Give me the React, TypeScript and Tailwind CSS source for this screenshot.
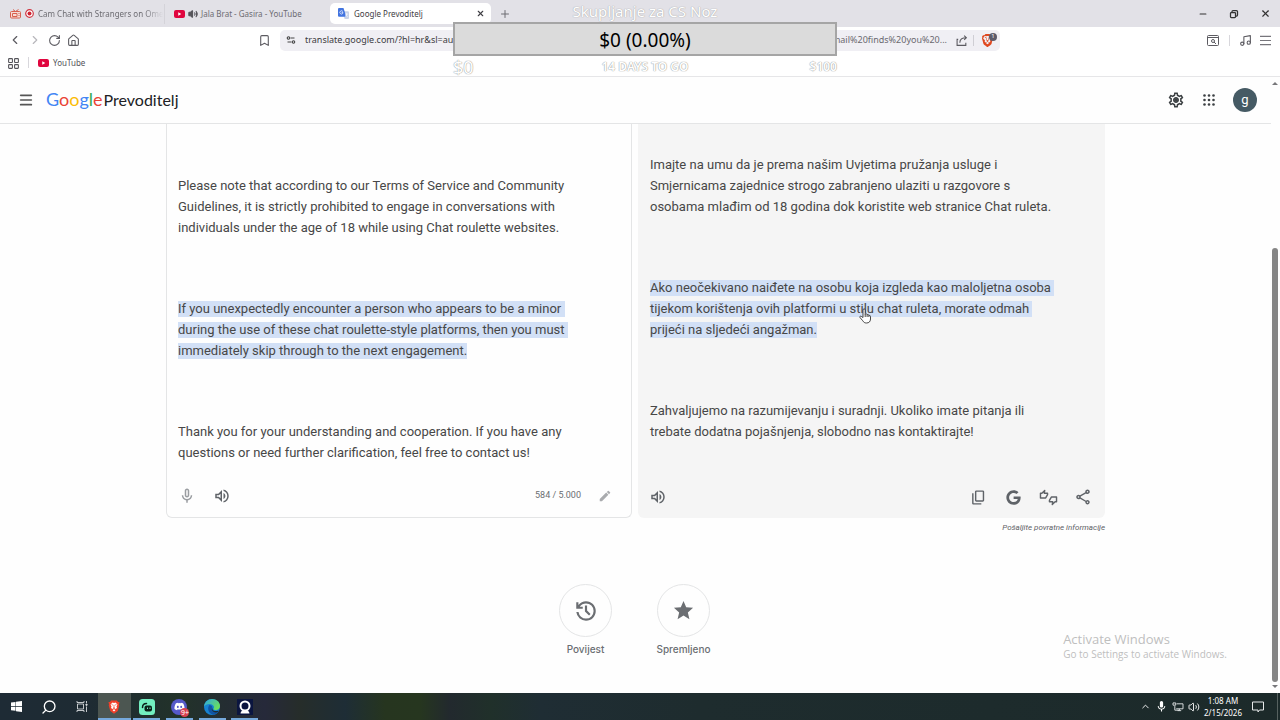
import type { ReactNode } from "react";
import {
  MdEdit,
  MdMic,
  MdOutlineMicNone,
  MdOutlineSettings,
  MdOutlineShare,
  MdStar,
} from "react-icons/md";
import { FaDiscord, FaGoogle } from "react-icons/fa";
import { SiBrave } from "react-icons/si";
import {
  Bookmark,
  ChevronLeft,
  ChevronRight,
  ChevronUp,
  House,
  LayoutGrid,
  Menu,
  Minus,
  Music,
  Plus,
  RotateCw,
  Search,
  Volume2,
  X,
} from "lucide-react";

const UI = "font-['Noto_Sans',sans-serif]";
const ROBOTO = "font-['Roboto',sans-serif]";

function Symbol({ d, className }: { d: string; className: string }) {
  return (
    <svg viewBox="0 -960 960 960" fill="currentColor" className={className} aria-hidden="true">
      <path d={d} />
    </svg>
  );
}

const VOLUME =
  "M560-131v-82q90-26 145-100t55-168q0-94-55-168T560-749v-82q124 28 202 125.5T840-481q0 127-78 224.5T560-131ZM120-360v-240h160l200-200v640L280-360H120Zm440 40v-322q47 22 73.5 66t26.5 96q0 51-26.5 94.5T560-320ZM400-606l-86 86H200v80h114l86 86v-252Z";
const COPY =
  "M360-240q-33 0-56.5-23.5T280-320v-480q0-33 23.5-56.5T360-880h360q33 0 56.5 23.5T800-800v480q0 33-23.5 56.5T720-240H360Zm0-80h360v-480H360v480ZM200-80q-33 0-56.5-23.5T120-160v-560h80v560h440v80H200Z";
const HISTORY =
  "M480-120q-138 0-240.5-91.5T122-440h82q14 104 92.5 172T480-200q117 0 198.5-81.5T760-480q0-117-81.5-198.5T480-760q-69 0-129 32t-101 88h110v80H120v-240h80v94q51-64 124.5-99T480-840q75 0 140.5 28.5t114 77q48.5 48.5 77 114T840-480q0 75-28.5 140.5t-77 114q-48.5 48.5-114 77T480-120Zm112-192L440-464v-216h80v184l128 128-56 56Z";

function YouTubeIcon() {
  return (
    <svg viewBox="0 0 22 16" className="h-2 w-[11px] shrink-0" aria-hidden="true">
      <rect width="22" height="16" rx="4" fill="#e0063f" />
      <path d="M8.5 4.5v7l6-3.5z" fill="#fff" />
    </svg>
  );
}

function TvIcon() {
  return (
    <svg viewBox="0 0 22 20" className="h-[10px] w-[11px] shrink-0" fill="none" stroke="#d8604f" strokeWidth="2" aria-hidden="true">
      <rect x="1" y="5" width="20" height="13" rx="2" fill="#f6dcd6" />
      <path d="M6 1l5 4 6-4M5 9h9v6H5zM17 9h2M17 13h2" />
    </svg>
  );
}

function RecordIcon() {
  return (
    <svg viewBox="0 0 18 18" className="size-[9px] shrink-0" aria-hidden="true">
      <circle cx="9" cy="9" r="7.6" fill="#fff" stroke="#cf3440" strokeWidth="2.4" />
      <circle cx="9" cy="9" r="4" fill="#cf2433" />
    </svg>
  );
}

function TranslateIcon() {
  return (
    <svg viewBox="0 0 20 20" className="size-[11px] shrink-0" aria-hidden="true">
      <path d="M8 6h10a2 2 0 0 1 2 2v10a2 2 0 0 1-2 2h-6z" fill="#c9d3e8" />
      <path d="M2 0h8l5 16H2a2 2 0 0 1-2-2V2a2 2 0 0 1 2-2z" fill="#4274e0" />
      <path d="M9 6.500A3 3 0 1 0 9 9.500V8H6.500M13 11h5M15.500 10v1c0 2-1 4-3 5M14 13l3 3" fill="none" stroke="#fff" strokeWidth="1.300" />
    </svg>
  );
}

function ThumbsIcon() {
  return (
    <svg viewBox="0 0 40 36" className="h-[17px] w-[19px] shrink-0" fill="none" stroke="currentColor" strokeWidth="3" strokeLinejoin="round" aria-hidden="true">
      <path d="M3 9v10h11l4-7V9h-7l1-6-6 6z" />
      <path d="M37 27V17H26l-4 7v3h7l-1 6 6-6z" />
    </svg>
  );
}

function TabStrip() {
  return (
    <div className={`flex h-[27px] items-center bg-[#e2e1e7] text-[8px] text-[#6d6c72] ${UI}`}>
      <button type="button" className="flex h-5 w-[165px] items-center gap-1 border-r border-[#d4d3d9] pl-[10px]">
        <TvIcon />
        <RecordIcon />
        <span className="whitespace-nowrap mask-r-from-85%">Cam Chat with Strangers on Ome</span>
      </button>
      <button type="button" className="flex h-5 w-[165px] items-center gap-[3px] pl-[9px]">
        <YouTubeIcon />
        <Volume2 className="size-[10px] fill-current text-[#55545a]" strokeWidth={2.5} />
        <span className="whitespace-nowrap">Jala Brat - Gasira - YouTube</span>
      </button>
      <div className="flex h-[21px] w-[161px] items-center rounded-[5px] bg-white pr-[6px] pl-2 text-[#3f3e44]">
        <button type="button" className="flex flex-1 items-center gap-[5px]">
          <TranslateIcon />
          <span className="whitespace-nowrap">Google Prevoditelj</span>
        </button>
        <button type="button" aria-label="Close tab">
          <X className="size-[9px]" strokeWidth={3} />
        </button>
      </div>
      <button type="button" aria-label="New tab" className="ml-2">
        <Plus className="size-3" strokeWidth={2} />
      </button>
      <div className="ml-auto flex items-center gap-[21px] pr-[9px] text-[#333]">
        <button type="button" aria-label="Minimize">
          <Minus className="size-[10px]" strokeWidth={2.5} />
        </button>
        <button type="button" aria-label="Restore">
          <svg viewBox="0 0 20 20" className="size-[10px]" fill="none" stroke="currentColor" strokeWidth="2.500" aria-hidden="true">
            <rect x="3" y="7" width="10" height="10" rx="1.500" />
            <path d="M6 7V5a2 2 0 0 1 2-2h7a2 2 0 0 1 2 2v7a2 2 0 0 1-2 2h-2" />
          </svg>
        </button>
        <button type="button" aria-label="Close">
          <X className="size-[11px]" strokeWidth={2.5} />
        </button>
      </div>
    </div>
  );
}

function AddressRow() {
  return (
    <div className={`flex h-[26px] items-center bg-white text-[9px] text-[#5c5b61] ${UI}`}>
      <nav className="flex w-[257px] items-center gap-[6px] pl-2">
        <button type="button" aria-label="Back"><ChevronLeft className="size-[14px]" strokeWidth={2} /></button>
        <button type="button" aria-label="Forward" className="text-[#b8b7bc]"><ChevronRight className="size-[14px]" strokeWidth={2} /></button>
        <button type="button" aria-label="Reload"><RotateCw className="size-[13px]" strokeWidth={2} /></button>
        <button type="button" aria-label="Home"><House className="size-[13px]" strokeWidth={2} /></button>
      </nav>
      <button type="button" aria-label="Bookmark this page" className="w-[23px] pl-px">
        <Bookmark className="size-[13px]" strokeWidth={2} />
      </button>
      <div className="flex h-[21px] max-w-[720px] flex-1 items-center rounded-[5px] bg-[#f0eff4] pr-[3px] pl-[6px]">
        <svg viewBox="0 0 20 20" className="size-[10px] shrink-0" fill="none" stroke="#444" strokeWidth="2.200" aria-hidden="true">
          <circle cx="5" cy="6" r="2.500" />
          <circle cx="15" cy="14" r="2.500" />
          <path d="M9 6h8M3 14h8" />
        </svg>
        <input
          aria-label="Address"
          className="ml-[9px] min-w-0 flex-1 bg-transparent text-[9px] text-[#3c3b41] outline-none"
          defaultValue="translate.google.com/?hl=hr&sl=auto&tl=hr"
        />
        <span className="whitespace-nowrap text-[#6a696f]">mail%20finds%20you%20...</span>
        <button type="button" aria-label="Share" className="ml-[9px] border-r border-[#cfced4] pr-[5px]">
          <svg viewBox="0 0 22 20" className="h-[11px] w-3" fill="none" stroke="#5c5b61" strokeWidth="2" aria-hidden="true">
            <path d="M4 8H2v11h16v-5M7 14c0-6 3-9 12-9M15 1l4 4-4 4" />
          </svg>
        </button>
        <button type="button" aria-label="Brave Shields" className="relative ml-[7px] pr-[3px]">
          <SiBrave className="size-[13px] text-[#e0481f]" />
          <span className="absolute -top-px right-0 flex size-2 items-center justify-center rounded-full bg-[#5c5b6a] text-[6px] text-white">1</span>
        </button>
      </div>
      <div className="ml-auto flex items-center pr-[9px]">
        <button type="button" aria-label="Search tabs" className="border-r border-[#d8d7dc] pr-[10px]">
          <svg viewBox="0 0 24 22" className="h-[11px] w-3" fill="none" stroke="currentColor" strokeWidth="2" aria-hidden="true">
            <rect x="1" y="1" width="22" height="20" rx="2" />
            <path d="M1 5h22M14 14l4 4" />
            <circle cx="12" cy="12" r="3" />
          </svg>
        </button>
        <button type="button" aria-label="Media" className="ml-[9px]"><Music className="size-[13px]" strokeWidth={2} /></button>
        <button type="button" aria-label="Browser menu" className="ml-2">
          <svg viewBox="0 0 12 12" className="size-[11px]" stroke="#77767c" strokeWidth="1.200" aria-hidden="true">
            <path d="M0 1.500h12M0 6h12M0 10.500h12" />
          </svg>
        </button>
      </div>
    </div>
  );
}

function BookmarkBar() {
  return (
    <div className={`flex h-6 items-start border-b border-[#e6e6e8] bg-white pl-[7px] text-[8px] text-[#55545a] ${UI}`}>
      <button type="button" aria-label="All bookmarks" className="flex h-5 items-center pr-2">
        <LayoutGrid className="size-[13px]" strokeWidth={2} />
      </button>
      <a href="#youtube" className="mt-1 flex h-[11px] items-center gap-1 border-l border-[#d8d7dc] pl-[9px]">
        <YouTubeIcon />
        YouTube
      </a>
    </div>
  );
}

function DonationGoal() {
  return (
    <div className={`absolute top-px left-1/2 -ml-[187px] w-96 ${UI}`}>
      <p className="mb-px text-center text-[15px] leading-5 text-white [text-shadow:0_0_1px_#aaa,0_0_1px_#aaa]">Skupljanje za CS Noz</p>
      <div className="flex h-[34px] items-center justify-center border-2 border-[#a5a5a5] bg-[#dbdbdb] pt-[2px] text-[19px] text-black">$0 (0.00%)</div>
      <div className="flex h-[22px] items-center justify-between text-xs text-white [text-shadow:0_0_1px_#999,0_0_1px_#999]">
        <span className="w-12 text-lg">$0</span>
        <span className="font-semibold">14 DAYS TO GO</span>
        <span className="w-12 text-right font-semibold">$100</span>
      </div>
    </div>
  );
}

function AppHeader() {
  return (
    <header className="flex h-[47px] items-center border-b border-[#e4e5e6] pr-[14px] pl-[18px]">
      <button type="button" aria-label="Main menu" className="text-[#555]">
        <Menu className="size-4" strokeWidth={2.5} />
      </button>
      <a href="#home" className="ml-3 flex items-baseline pb-[2px] font-['Lato',sans-serif]">
        <span className="text-[18px]">
          <span className="text-[#4285f4]">G</span>
          <span className="text-[#ea4335]">o</span>
          <span className="text-[#fbbc05]">o</span>
          <span className="text-[#4285f4]">g</span>
          <span className="text-[#34a853]">l</span>
          <span className="text-[#ea4335]">e</span>
        </span>
        <span className="ml-px text-base text-[#202124]">Prevoditelj</span>
      </a>
      <div className="ml-auto flex items-center gap-[15px] text-[#3c4043]">
        <button type="button" aria-label="Settings" className="relative">
          <MdOutlineSettings className="size-[18px]" />
          <span className="absolute top-[7px] left-[7px] size-1 rounded-full bg-current" />
        </button>
        <button type="button" aria-label="Google apps">
          <svg viewBox="0 0 18 18" className="size-[18px]" fill="currentColor" aria-hidden="true">
            {[4.5, 9, 13.5].map((y) => [4.5, 9, 13.5].map((x) => <circle key={`${x}-${y}`} cx={x} cy={y} r="1.3" />))}
          </svg>
        </button>
        <button type="button" aria-label="Account" className={`flex size-6 items-center justify-center rounded-full bg-[#455a64] text-[13px] leading-3 text-white ${ROBOTO}`}>
          g
        </button>
      </div>
    </header>
  );
}

function Lines({ lines, marked = false }: { lines: string[]; marked?: boolean }) {
  return (
    <p>
      {lines.map((line, i) => (
        <span key={line} className="block whitespace-nowrap">
          <span className={marked ? "bg-[#d2e0f6] pb-px" : ""}>
            {line}
            {marked && i < lines.length - 1 ? "\u00a0" : ""}
          </span>
        </span>
      ))}
    </p>
  );
}

function IconButton({ label, children }: { label: string; children: ReactNode }) {
  return (
    <button type="button" aria-label={label} className="flex h-5 w-[18px] items-center justify-center">
      {children}
    </button>
  );
}

function HandCursor() {
  return (
    <svg viewBox="0 0 24 32" className="absolute top-[184px] left-[221px] h-4 w-3" fill="#fff" stroke="#333" strokeWidth="1.800" strokeLinejoin="round" aria-hidden="true">
      <path d="M8 19V4a2.200 2.200 0 0 1 4.400 0v9a2 2 0 0 1 3.800 0v1a2 2 0 0 1 3.600.600v1a1.800 1.800 0 0 1 3.200 1.200V22c0 5-3 8-8 8-4 0-5.500-1.500-7.500-4.500L2 19c-1.200-2 1-3.600 2.600-2.200z" />
      <path d="M12.400 13v5M16.200 14v4M19.800 15v3" fill="none" />
    </svg>
  );
}

function Panels() {
  return (
    <div className="mx-auto w-full max-w-[939px]">
      <div className={`grid grid-cols-[466fr_467fr] gap-[6px] text-[13px] leading-[21px] text-[#474747] ${ROBOTO}`}>
        <section aria-label="Source text" className="flex flex-col rounded-b-md border border-t-0 border-[#e4e5e6] pt-[51px] pl-[11px]">
          <div className="flex flex-col gap-[60px]">
            <Lines
              lines={[
                "Please note that according to our Terms of Service and Community",
                "Guidelines, it is strictly prohibited to engage in conversations with",
                "individuals under the age of 18 while using Chat roulette websites.",
              ]}
            />
            <Lines
              marked
              lines={[
                "If you unexpectedly encounter a person who appears to be a minor",
                "during the use of these chat roulette-style platforms, then you must",
                "immediately skip through to the next engagement.",
              ]}
            />
            <Lines
              lines={[
                "Thank you for your understanding and cooperation. If you have any",
                "questions or need further clarification, feel free to contact us!",
              ]}
            />
          </div>
          <div className="mt-auto flex items-center pr-[17px] pb-[11px] text-[#5f6368]">
            <span className="text-[#9a9da1]">
              <IconButton label="Translate by voice"><MdOutlineMicNone className="size-[18px]" /></IconButton>
            </span>
            <span className="ml-[17px]">
              <IconButton label="Listen to source"><Symbol d={VOLUME} className="size-[18px]" /></IconButton>
            </span>
            <span className="ml-auto text-[9px] text-[#6b6e72]">584 / 5.000</span>
            <span className="ml-[15px] text-[#a9abae]">
              <IconButton label="Handwriting"><MdEdit className="size-[14px]" /></IconButton>
            </span>
          </div>
        </section>
        <section aria-label="Translation" className="relative flex h-[394px] flex-col rounded-b-md bg-[#f5f5f5] pt-[30px] pl-3">
          <div className="flex flex-col gap-[60px]">
            <Lines
              lines={[
                "Imajte na umu da je prema našim Uvjetima pružanja usluge i",
                "Smjernicama zajednice strogo zabranjeno ulaziti u razgovore s",
                "osobama mlađim od 18 godina dok koristite web stranice Chat ruleta.",
              ]}
            />
            <Lines
              marked
              lines={[
                "Ako neočekivano naiđete na osobu koja izgleda kao maloljetna osoba",
                "tijekom korištenja ovih platformi u stilu chat ruleta, morate odmah",
                "prijeći na sljedeći angažman.",
              ]}
            />
            <Lines
              lines={[
                "Zahvaljujemo na razumijevanju i suradnji. Ukoliko imate pitanja ili",
                "trebate dodatna pojašnjenja, slobodno nas kontaktirajte!",
              ]}
            />
          </div>
          <div className="mt-auto -ml-px flex items-center gap-[17px] pr-[13px] pb-[11px] text-[#5f6368]">
            <IconButton label="Listen to translation"><Symbol d={VOLUME} className="size-[18px]" /></IconButton>
            <span className="ml-auto">
              <IconButton label="Copy translation"><Symbol d={COPY} className="size-[17px]" /></IconButton>
            </span>
            <IconButton label="Search with Google"><FaGoogle className="size-[15px]" /></IconButton>
            <IconButton label="Rate translation"><ThumbsIcon /></IconButton>
            <IconButton label="Share translation"><MdOutlineShare className="size-[18px]" /></IconButton>
          </div>
          <HandCursor />
        </section>
      </div>
      <div className={`flex h-5 items-center justify-end text-[8px] text-[#5f6368] italic ${ROBOTO}`}>
        <a href="#feedback">Pošaljite povratne informacije</a>
      </div>
    </div>
  );
}

function RoundAction({ label, children }: { label: string; children: ReactNode }) {
  return (
    <button type="button" className="flex w-[98px] flex-col items-center gap-1 text-[#6b6e72]">
      <span className="flex size-[53px] items-center justify-center rounded-full border border-[#e4e5e6]">{children}</span>
      <span className="font-['Inter',sans-serif] text-[10px] leading-4 font-medium">{label}</span>
    </button>
  );
}

function TaskItem({ label, active = false, open = true, children }: { label: string; active?: boolean; open?: boolean; children: ReactNode }) {
  return (
    <button
      type="button"
      aria-label={label}
      className={`flex h-full flex-1 items-center justify-center pt-[2px] ${active ? "bg-[#4c5651]" : ""}`}
    >
      <span className={`flex h-full items-center justify-center border-b-2 ${active ? "w-full" : "w-[27px]"} ${open ? "border-[#76a9dc]" : "border-transparent"}`}>
        {children}
      </span>
    </button>
  );
}

function Taskbar() {
  return (
    <footer
      className={`flex h-[27px] items-stretch bg-[linear-gradient(90deg,#1e2b35_0px,#1e2b33_90px,#223229_180px,#26293a_265px,#262d2a_300px,#1e2d36_345px,#26351f_385px,#26361f_420px,#22292e_450px,#20302a_490px,#1f2d34_540px,#1e2c2e_700px,#1c2a2a_100%)] text-white ${UI}`}
    >
      <div className="flex w-[261px] items-stretch">
        <TaskItem label="Start" open={false}>
          <svg viewBox="0 0 22 22" className="size-[11px]" fill="#fff" aria-hidden="true">
            <path d="M0 3l9-1.200V10H0zM10 1.600L22 0v10H10zM0 11.500h9v8.200L0 18.500zM10 11.500h12V22l-12-1.700z" />
          </svg>
        </TaskItem>
        <TaskItem label="Search" open={false}>
          <Search className="size-4 -scale-x-100" strokeWidth={2} />
        </TaskItem>
        <TaskItem label="Task view" open={false}>
          <svg viewBox="0 0 24 22" className="h-[11px] w-3" fill="none" stroke="#d4d8da" strokeWidth="1.800" aria-hidden="true">
            <path d="M2 0v3h14V0M3 6h12v10H3zM2 22v-3h14v3M21 0v4M21 11v11" />
            <circle cx="21" cy="7.500" r="1.500" fill="#fff" />
          </svg>
        </TaskItem>
        <TaskItem label="Brave" active>
          <svg viewBox="0 0 24 28" className="h-[14px] w-3" aria-hidden="true">
            <path d="M6 1h12l2 3 3 0-1 5 .5 2-3 11-7.500 5.500L4.500 22l-3-11L2 9 1 4h3z" fill="#f1402a" />
            <path d="M12 6l3-1 4 4-2 4 1 3-3 2-3-2-3 2-3-2 1-3-2-4 4-4zM9 20l3-1.500 3 1.500-3 3z" fill="#fff" />
            <path d="M7 9l4 1.500M17 9l-4 1.500M12 11v4l-2 1M12 15l2 1" stroke="#f1402a" strokeWidth="1.300" fill="none" />
          </svg>
        </TaskItem>
        <TaskItem label="Streamlabs">
          <svg viewBox="0 0 32 32" className="size-4" aria-hidden="true">
            <rect width="32" height="32" rx="7" fill="#73efc0" />
            <path d="M7 17c0-5 3-8 8-8" fill="none" stroke="#0b2019" strokeWidth="3" strokeLinecap="round" />
            <rect x="11" y="13" width="15" height="12" rx="4" fill="#0b2019" />
            <path d="M17 17v3M22 17v3" stroke="#73efc0" strokeWidth="2" />
          </svg>
        </TaskItem>
        <TaskItem label="Discord">
          <span className="relative flex size-4 items-center justify-center rounded-full bg-[#5559c9]">
            <FaDiscord className="size-[11px]" />
            <span className="absolute -right-[2px] -bottom-[2px] flex h-[9px] w-[9px] items-center justify-center rounded-full bg-[#d8414f] text-[7px] leading-none">9+</span>
          </span>
        </TaskItem>
        <TaskItem label="Microsoft Edge">
          <svg viewBox="0 0 32 32" className="size-4" aria-hidden="true">
            <defs>
              <linearGradient id="edgeTop" x1="0" y1="0" x2="1" y2="0.600">
                <stop offset="0" stopColor="#2aa5e6" />
                <stop offset="1" stopColor="#6be05c" />
              </linearGradient>
            </defs>
            <circle cx="16" cy="16" r="16" fill="#1783d2" />
            <path d="M0 15C1 6 8 0 16 0c9 0 16 6 16 14 0 5-4 8-8 8-3 0-5-1-5-2.500 0-1 1-1.500 1-3.500 0-3-4-6-9-6-5 0-9 2-11 5z" fill="url(#edgeTop)" />
            <path d="M11 12c-5 5-3 17 7 19.500 5 0 9-3 11.500-7-3 1.500-13 2-14-5-.3-2 .5-3 1-4-1-2-3-3.500-5.500-3.500z" fill="#1154a3" />
            <path d="M17 17c-2 5 4 9 12 6l-1 3c-8 3-14-3-12-8z" fill="#1b2c33" />
          </svg>
        </TaskItem>
        <TaskItem label="Camera">
          <svg viewBox="0 0 32 32" className="size-4" aria-hidden="true">
            <rect width="32" height="32" fill="#0b1540" />
            <circle cx="16" cy="14" r="9" fill="none" stroke="#fff" strokeWidth="4" />
            <path d="M7 29c1-6 5-7 9-5 4-2 8-1 9 5z" fill="#fff" />
          </svg>
        </TaskItem>
      </div>
      <div className="ml-auto flex items-center pr-[2px]">
        <button type="button" aria-label="Show hidden icons"><ChevronUp className="size-[11px]" strokeWidth={2} /></button>
        <MdMic className="ml-1 size-[13px]" />
        <svg viewBox="0 0 24 22" className="ml-1 h-[10px] w-3" fill="none" stroke="#e6e9ea" strokeWidth="2" aria-hidden="true">
          <path d="M9 4h14v11H8M5 9v9h9M11 19h8M15 15v4M1 2h6v5H1z" />
        </svg>
        <Volume2 className="ml-1 size-3" strokeWidth={1.8} />
        <div className="ml-[3px] w-10 text-center text-[8px] leading-3 whitespace-nowrap">
          <div>1:08 AM</div>
          <div>2/15/2026</div>
        </div>
        <button type="button" aria-label="Notifications" className="ml-[9px]">
          <svg viewBox="0 0 24 24" className="size-3" fill="none" stroke="#e6e9ea" strokeWidth="2" aria-hidden="true">
            <path d="M1 2h22v16h-8l-3 4v-4H1z" />
          </svg>
        </button>
        <span className="ml-[13px] h-[27px] w-px bg-[#56615f]" />
      </div>
    </footer>
  );
}

export default function App() {
  return (
    <div className="relative flex min-h-screen flex-col bg-[#fefefe]">
      <TabStrip />
      <AddressRow />
      <BookmarkBar />
      <div className="flex flex-1">
        <div className="relative flex min-w-0 flex-1 flex-col">
          <AppHeader />
          <main className="flex flex-1 flex-col">
            <Panels />
            <div className="flex justify-center pt-[46px] pr-[2px]">
              <RoundAction label="Povijest"><Symbol d={HISTORY} className="size-[26px]" /></RoundAction>
              <RoundAction label="Spremljeno"><MdStar className="size-[23px]" /></RoundAction>
            </div>
          </main>
          <aside className="absolute right-11 bottom-8 font-['Open_Sans','Noto_Sans',sans-serif] text-[#bfbfbf]">
            <p className="text-[13px] leading-4">Activate Windows</p>
            <p className="text-[10px] leading-[14px]">Go to Settings to activate Windows.</p>
          </aside>
        </div>
        <div className="flex w-[9px] flex-col items-center py-1 pr-[2px]" aria-hidden="true">
          <svg viewBox="0 0 6 4" className="h-1 w-[6px]" fill="#77777a"><path d="M0 4l3-3 3 3z" /></svg>
          <div className="mt-[163px] mb-[3px] w-[6px] flex-1 rounded-full bg-[#858585]" />
          <svg viewBox="0 0 6 4" className="h-1 w-[6px]" fill="#77777a"><path d="M0 0l3 3 3-3z" /></svg>
        </div>
      </div>
      <Taskbar />
      <DonationGoal />
    </div>
  );
}
